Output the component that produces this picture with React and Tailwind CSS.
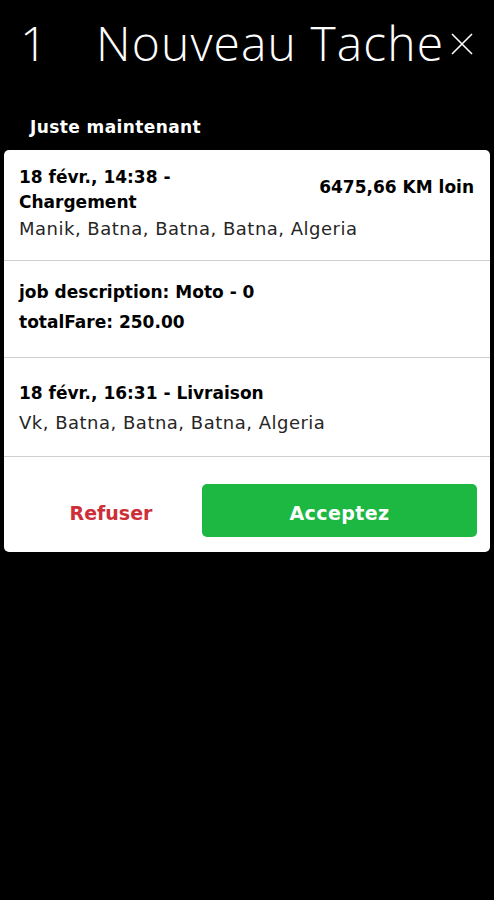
import React from "react";

export default function App() {
  const f = { fontFamily: '"DejaVu Sans", "Open Sans", sans-serif' };
  return (
    <div className="w-[494px] h-[900px] bg-black text-white overflow-hidden" style={f}>
      <div className="flex items-start h-[96px] pt-[17px]">
        <div className="ml-[20px] w-[76px] text-[48px] leading-[52px] font-extralight [font-family:'Open_Sans',sans-serif]">1</div>
        <div className="w-[354px] text-[48px] leading-[52px] font-extralight [font-family:'Open_Sans',sans-serif] tracking-[1.1px] whitespace-nowrap">Nouveau Tache</div>
        <svg className="mt-[16px]" width="24" height="22" viewBox="0 0 24 22" fill="none" stroke="white" strokeWidth="1.6">
          <path d="M2 1 L22 21 M22 1 L2 21" />
        </svg>
      </div>
      <div className="pl-[30px] pt-[21px] h-[54px] text-[17px] font-bold leading-[20px] tracking-[0.4px]">Juste maintenant</div>
      <div className="mx-[4px] w-[486px] bg-white rounded-[5px] text-black">
        <div className="pl-[15px] pr-[16px] pt-[14.5px] h-[111px] border-b border-[#cfcfcf]">
          <div className="flex justify-between">
            <div>
              <div className="text-[17px] font-bold leading-[25px]">18 févr., 14:38 -</div>
              <div className="text-[17px] font-bold leading-[25px]">Chargement</div>
            </div>
            <div className="text-[17px] font-bold leading-[25px] mt-[10px] whitespace-nowrap">6475,66 KM loin</div>
          </div>
          <div className="text-[18px] leading-[28px] tracking-[0.5px] text-[#262626] whitespace-nowrap">Manik, Batna, Batna, Batna, Algeria</div>
        </div>
        <div className="pl-[15px] pt-[16px] h-[97px] border-b border-[#cfcfcf]">
          <div className="text-[17px] font-bold leading-[30px]">job description: Moto - 0</div>
          <div className="text-[17px] font-bold leading-[30px]">totalFare: 250.00</div>
        </div>
        <div className="pl-[15px] pt-[20.5px] h-[99px] border-b border-[#cfcfcf]">
          <div className="text-[17px] font-bold leading-[29px]">18 févr., 16:31 - Livraison</div>
          <div className="text-[18px] leading-[29px] tracking-[0.5px] text-[#262626]">Vk, Batna, Batna, Batna, Algeria</div>
        </div>
        <div className="flex items-start h-[95px] pt-[27px] pr-[13px]">
          <div className="w-[198px] h-[53px] pl-[16px] pt-[5px] flex items-center justify-center text-[19px] font-bold text-[#cc2f38]">Refuser</div>
          <div className="flex-1 h-[53px] pt-[5px] rounded-[5px] bg-[#1db842] flex items-center justify-center text-white text-[19px] font-bold tracking-[0.4px]">Acceptez</div>
        </div>
      </div>
    </div>
  );
}
